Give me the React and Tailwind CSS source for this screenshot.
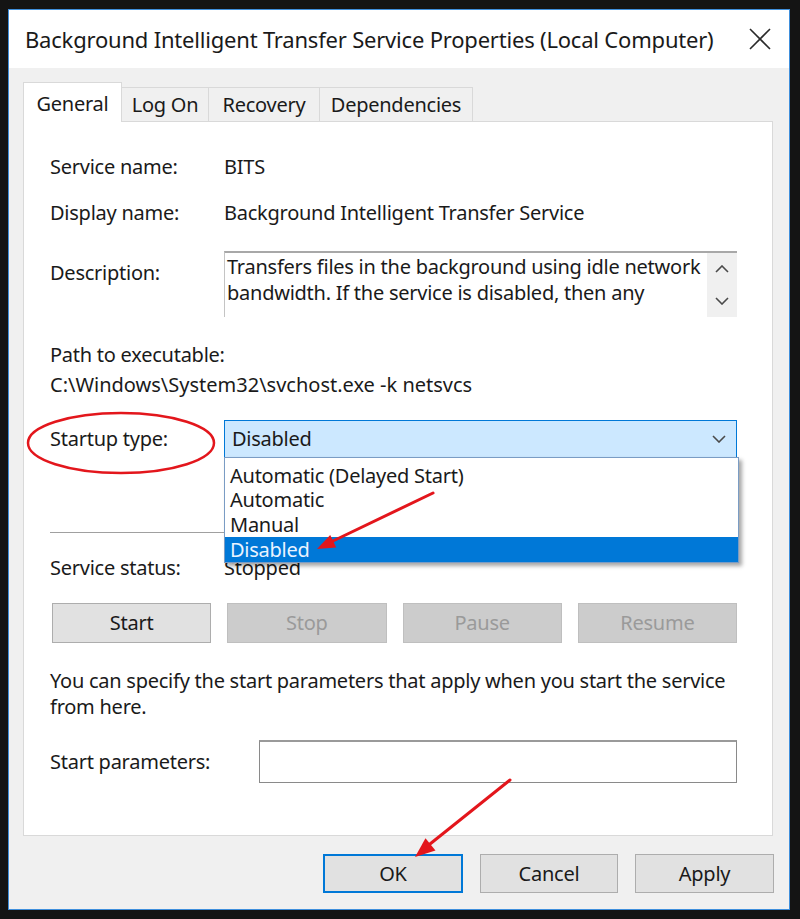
import React from "react";

const F = { fontFamily: '"Noto Sans", "Open Sans", sans-serif' };

function Chevron({ up = false, className = "" }) {
  return (
    <svg width="14" height="8" viewBox="0 0 14 8" className={className}>
      <polyline
        points={up ? "1,7 7,1 13,7" : "1,1 7,7 13,1"}
        fill="none"
        stroke="#4a4a4a"
        strokeWidth="1.6"
      />
    </svg>
  );
}

function Btn({ children, disabled = false, def = false, className = "" }) {
  let cls = "flex items-center justify-center text-[20px] ";
  if (disabled) cls += "bg-[#cccccc] border border-[#bfbfbf] text-[#9a9a9a] ";
  else if (def) cls += "bg-[#e1e1e1] border-2 border-[#0078d7] text-[#1a1a1a] ";
  else cls += "bg-[#e1e1e1] border border-[#adadad] text-[#1a1a1a] ";
  return <div className={cls + className}>{children}</div>;
}

export default function App() {
  return (
    <div
      className="relative w-[800px] h-[919px] bg-[#141414] pt-[9px] pl-[8px] pr-[10px] pb-[9px]"
      style={F}
    >
      <div className="h-full border border-[#3f8fdc] bg-[#f0f0f0] flex flex-col text-[#1a1a1a]">
        {/* title bar */}
        <div className="h-[58px] bg-white flex items-center pl-[16px] pr-[16px]">
          <div className="text-[22px] tracking-[-0.2px] flex-1 whitespace-nowrap">
            Background Intelligent Transfer Service Properties (Local Computer)
          </div>
          <svg width="24" height="24" viewBox="0 0 24 24" className="mr-[1px]">
            <line x1="2" y1="2" x2="22" y2="22" stroke="#2a2a2a" strokeWidth="1.6" />
            <line x1="22" y1="2" x2="2" y2="22" stroke="#2a2a2a" strokeWidth="1.6" />
          </svg>
        </div>

        {/* body */}
        <div className="flex-1 flex flex-col pt-[14px] pl-[14px] pr-[16px]">
          {/* tabs */}
          <div className="flex items-end h-[40px] -mb-[1px] relative z-10 text-[20px] tracking-[-0.25px]">
            <div className="h-[40px] w-[99px] bg-white border border-b-0 border-[#d9d9d9] flex items-start justify-center pt-[6px]">
              General
            </div>
            <div className="h-[35px] w-[87px] bg-[#f0f0f0] border border-l-0 border-[#d9d9d9] flex items-center justify-center">
              Log On
            </div>
            <div className="h-[35px] w-[111px] bg-[#f0f0f0] border border-l-0 border-[#d9d9d9] flex items-center justify-center">
              Recovery
            </div>
            <div className="h-[35px] w-[153px] bg-[#f0f0f0] border border-l-0 border-[#d9d9d9] flex items-center justify-center">
              Dependencies
            </div>
          </div>

          {/* panel */}
          <div className="h-[715px] bg-white border border-[#d9d9d9] pl-[26px] pr-[35px] flex flex-col text-[20px] leading-[26px] tracking-[-0.25px]">
            <div className="flex mt-[32px] h-[26px]">
              <div className="w-[174px]">Service name:</div>
              <div>BITS</div>
            </div>
            <div className="flex mt-[20px] h-[26px]">
              <div className="w-[174px]">Display name:</div>
              <div>Background Intelligent Transfer Service</div>
            </div>
            <div className="flex mt-[25px] h-[66px]">
              <div className="w-[174px] pt-[9px]">Description:</div>
              <div className="flex-1 flex border-t-2 border-t-[#a8a8a8] border-l border-l-[#c4c4c4]">
                <div className="flex-1 pl-[2px] pt-[1px] leading-[26px]">
                  Transfers files in the background using idle network bandwidth. If the service is disabled, then any
                </div>
                <div className="w-[30px] bg-[#f0f0f0] flex flex-col items-center justify-between pt-[12px] pb-[12px]">
                  <Chevron up />
                  <Chevron />
                </div>
              </div>
            </div>
            <div className="mt-[25px] h-[26px]">Path to executable:</div>
            <div className="mt-[4px] h-[26px] tracking-normal">C:\Windows\System32\svchost.exe -k netsvcs</div>

            <div className="flex items-center mt-[22px] h-[38px]">
              <div className="w-[174px]">Startup type:</div>
              <div className="relative flex-1 h-[38px]">
                <div className="h-full bg-[#cce8ff] border border-[#0078d7] flex items-center pl-[7px] pr-[10px]">
                  <div className="flex-1">Disabled</div>
                  <Chevron />
                </div>
                <div className="absolute left-0 top-[37px] w-[515px] h-[106px] bg-white border border-[#7a9cc4] pt-[5px] z-20 shadow-[3px_3px_4px_rgba(0,0,0,0.35)]">
                  <div className="h-[25px] pl-[5px] leading-[25px]">Automatic (Delayed Start)</div>
                  <div className="h-[24px] pl-[5px] leading-[24px]">Automatic</div>
                  <div className="h-[25px] pl-[5px] leading-[25px]">Manual</div>
                  <div className="h-[25px] pl-[5px] leading-[25px] bg-[#0078d7] text-[#eaf3ff]">Disabled</div>
                </div>
              </div>
            </div>

            <div className="mt-[74px] h-px bg-[#a0a0a0]" />

            <div className="flex mt-[22px] h-[26px]">
              <div className="w-[174px]">Service status:</div>
              <div>Stopped</div>
            </div>

            <div className="grid grid-cols-4 gap-[16px] mt-[22px] h-[40px] ml-[2px]">
              <Btn>Start</Btn>
              <Btn disabled>Stop</Btn>
              <Btn disabled>Pause</Btn>
              <Btn disabled>Resume</Btn>
            </div>

            <div className="mt-[25px] h-[52px] -mr-[10px]">
              You can specify the start parameters that apply when you start the service from here.
            </div>

            <div className="flex items-center mt-[20px] h-[43px]">
              <div className="w-[209px]">Start parameters:</div>
              <div className="flex-1 h-[43px] bg-white border border-[#8a8a8a] border-t-2 border-t-[#9a9a9a]" />
            </div>
          </div>

          {/* bottom buttons */}
          <div className="flex justify-end gap-[17px] mt-[18px] mr-[-1px] tracking-[-0.25px]">
            <Btn def className="w-[140px] h-[39px]">OK</Btn>
            <Btn className="w-[138px] h-[39px]">Cancel</Btn>
            <Btn className="w-[139px] h-[39px]">Apply</Btn>
          </div>
        </div>
      </div>

      {/* red annotations */}
      <svg className="absolute left-0 top-0 pointer-events-none z-30" width="800" height="919">
        <ellipse cx="121" cy="443" rx="93" ry="30" fill="none" stroke="#e3161c" strokeWidth="2.5" />
        <line x1="433" y1="493" x2="333" y2="541" stroke="#e3161c" strokeWidth="3" strokeLinecap="round" />
        <polygon points="317,549 336.2,547.5 330.2,534.9" fill="#e3161c" />
        <line x1="510" y1="780" x2="430" y2="844" stroke="#e3161c" strokeWidth="3" strokeLinecap="round" />
        <polygon points="415,857 435.5,850.6 425.5,838.2" fill="#e3161c" />
      </svg>
    </div>
  );
}
